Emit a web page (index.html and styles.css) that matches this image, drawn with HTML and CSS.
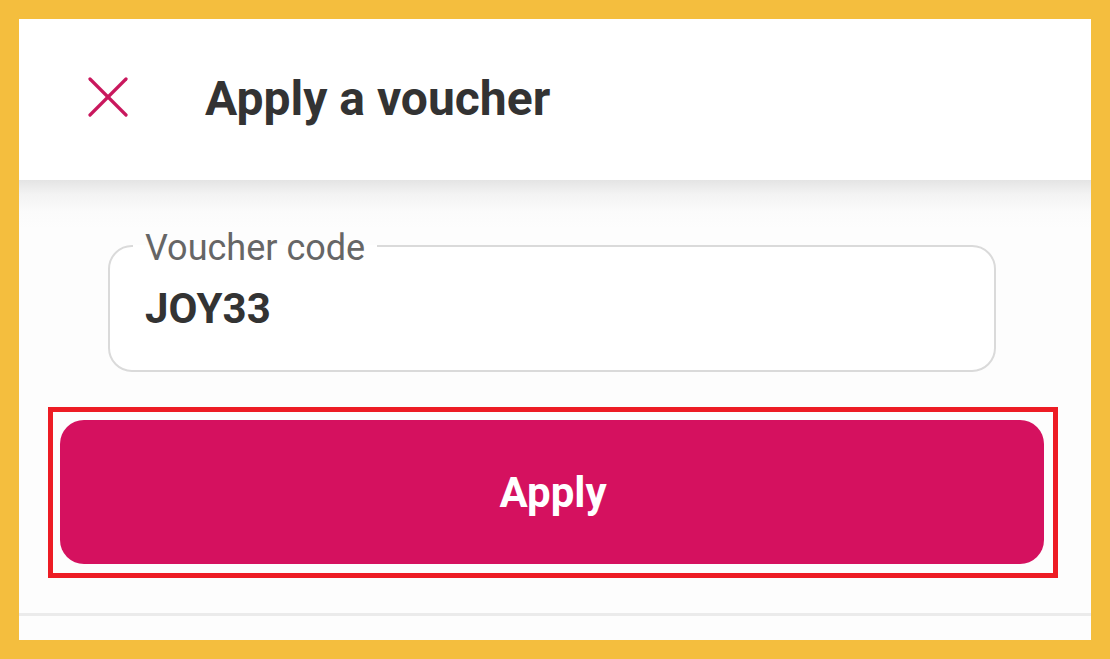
FILE: index.html
```html
<!DOCTYPE html>
<html lang="en">
<head>
<meta charset="utf-8">
<title>Apply a voucher</title>
<link rel="stylesheet" href="styles.css">
</head>
<body>
<div class="frame">
  <div class="sheet">
    <header class="header">
      <button class="close" aria-label="Close">
        <svg width="40" height="40" viewBox="0 0 40 40" fill="none" stroke="#c9175d" stroke-width="3.2" stroke-linecap="round">
          <line x1="2" y1="2" x2="38" y2="38"/>
          <line x1="38" y1="2" x2="2" y2="38"/>
        </svg>
      </button>
      <h1 class="title">Apply a voucher</h1>
    </header>
    <main class="content">
      <fieldset class="field">
        <legend class="label">Voucher code</legend>
        <div class="value">JOY33</div>
      </fieldset>
      <div class="btn-wrap">
        <button class="apply">Apply</button>
        <span class="highlight"></span>
      </div>
    </main>
    <div class="divider"></div>
  </div>
</div>
</body>
</html>
```

FILE: styles.css
```css
html, body {
  margin: 0;
  padding: 0;
}
body {
  background: #f4be3e;
  font-family: Roboto, "Liberation Sans", sans-serif;
}
.frame {
  width: 1110px;
  height: 659px;
  padding: 19px;
  box-sizing: border-box;
}
.sheet {
  height: 621px;
  background: #fdfdfd;
  display: flex;
  flex-direction: column;
}
.header {
  height: 161px;
  flex: none;
  background: #ffffff;
  display: flex;
  align-items: center;
  padding-left: 69px;
  box-sizing: border-box;
}
.close {
  width: 40px;
  height: 40px;
  padding: 0;
  margin: 0 77px 0 0;
  border: 0;
  background: none;
  display: block;
  margin-top: -6px;
}
.close svg {
  display: block;
}
.title {
  margin: 0;
  font-size: 48px;
  font-weight: 700;
  color: #333333;
  line-height: 1;
  margin-top: -1px;
}
.content {
  flex: 1;
  background: linear-gradient(#e4e4e4 0, #f3f3f3 14px, #fbfbfb 32px, #fdfdfd 48px);
  padding-top: 48px;
  display: flex;
  flex-direction: column;
}
.field {
  margin: 0 95px 0 89px;
  padding: 0 0 37px 23px;
  border: 2px solid #dadada;
  border-radius: 24px;
  background: #ffffff;
}
.label {
  padding: 0 12px;
  font-size: 36px;
  line-height: 36px;
  color: #666666;
  position: relative;
  top: 2px;
}
.value {
  margin-top: 21px;
  padding-left: 12px;
  font-size: 42px;
  line-height: 48px;
  font-weight: 700;
  color: #333333;
}
.btn-wrap {
  position: relative;
  margin: 48px 47px 0 41px;
}
.apply {
  display: flex;
  align-items: center;
  justify-content: center;
  width: 100%;
  height: 144px;
  border: 0;
  border-radius: 24px;
  background: #d5115f;
  color: #ffffff;
  font-family: Roboto, "Liberation Sans", sans-serif;
  font-size: 42px;
  font-weight: 700;
  padding: 0 0 0 2px;
}
.highlight {
  position: absolute;
  top: -13px;
  left: -12px;
  right: -14px;
  bottom: -14px;
  border: 5px solid #ed1c24;
  pointer-events: none;
}
.divider {
  height: 3px;
  background: #ebebeb;
  margin-bottom: 24px;
  flex: none;
}
```
